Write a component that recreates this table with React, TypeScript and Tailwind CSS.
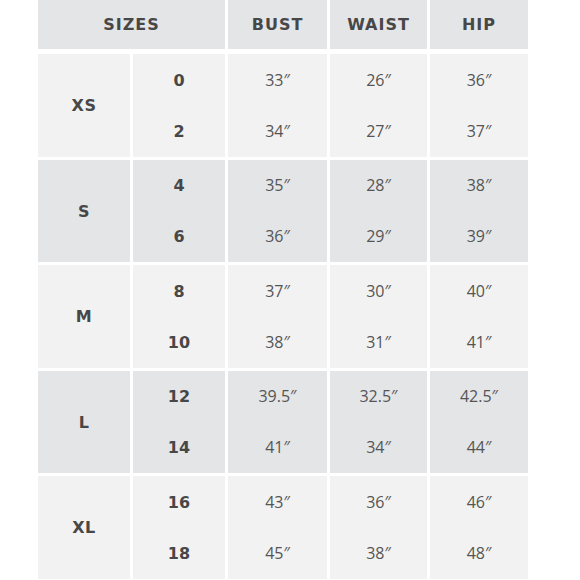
import React from "react";

const groups = [
  { label: "XS", rows: [["0", "33″", "26″", "36″"], ["2", "34″", "27″", "37″"]] },
  { label: "S", rows: [["4", "35″", "28″", "38″"], ["6", "36″", "29″", "39″"]] },
  { label: "M", rows: [["8", "37″", "30″", "40″"], ["10", "38″", "31″", "41″"]] },
  { label: "L", rows: [["12", "39.5″", "32.5″", "42.5″"], ["14", "41″", "34″", "44″"]] },
  { label: "XL", rows: [["16", "43″", "36″", "46″"], ["18", "45″", "38″", "48″"]] },
];

const bold = { fontFamily: '"DejaVu Sans", sans-serif' };
const reg = { fontFamily: '"Open Sans", "Noto Sans", sans-serif' };

export default function App() {
  return (
    <div className="w-[580px] h-[580px] bg-white overflow-hidden pl-[38px]">
      <div className="grid grid-cols-[92px_92px_99px_97px_98px] gap-x-[3px] h-[49px]">
        {["SIZES", "BUST", "WAIST", "HIP"].map((h, i) => (
          <div
            key={h}
            style={bold}
            className={`bg-[#e4e5e7] flex items-center justify-center text-[16px] font-bold tracking-[1px] text-[#474747] ${i === 0 ? "col-span-2" : ""}`}
          >
            {h}
          </div>
        ))}
      </div>
      <div className="flex flex-col gap-y-[3px] mt-[5px]">
        {groups.map((g, gi) => {
          const bg = gi % 2 === 0 ? "bg-[#f2f2f2]" : "bg-[#e4e5e7]";
          return (
            <div key={g.label} className="grid grid-cols-[92px_92px_99px_97px_98px] gap-x-[3px] h-[102.5px]">
              <div style={bold} className={`${bg} flex items-center justify-center pt-[2px] text-[16px] font-bold text-[#474747] tracking-[0.5px]`}>
                {g.label}
              </div>
              {[0, 1, 2, 3].map((c) => (
                <div key={c} className={`${bg} flex flex-col`}>
                  {g.rows.map((r, ri) => (
                    <div
                      key={ri}
                      style={c === 0 ? bold : reg}
                      className={`flex-1 flex items-center justify-center ${c === 0 ? "pt-[2px] text-[16px] font-bold text-[#474747]" : "text-[16px] text-[#555555]"}`}
                    >
                      {r[c]}
                    </div>
                  ))}
                </div>
              ))}
            </div>
          );
        })}
      </div>
    </div>
  );
}
